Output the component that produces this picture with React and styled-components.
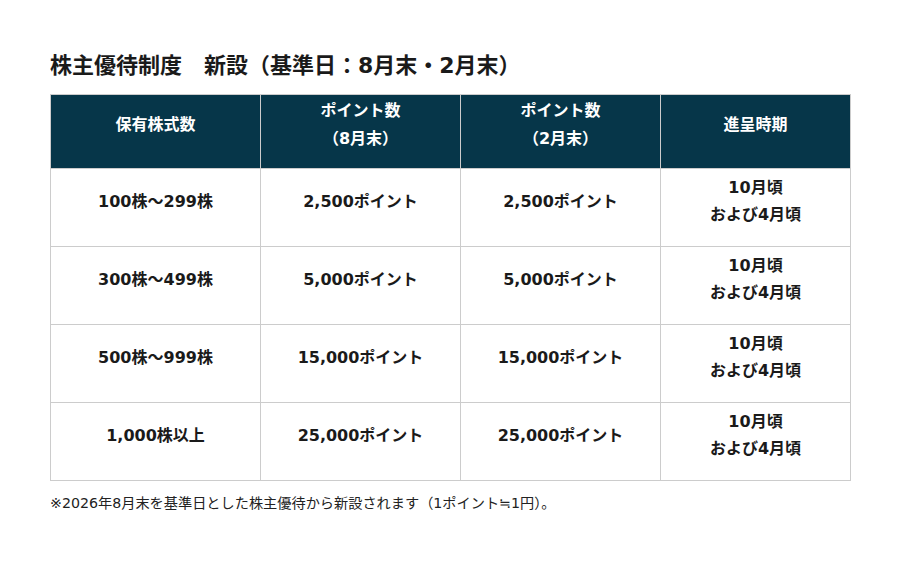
import React from "react";
import styled, { createGlobalStyle } from "styled-components";

const Global = createGlobalStyle`
  html, body { margin: 0; padding: 0; background: #fff; }
  body { font-family: "DejaVu Sans", "Noto Sans CJK JP", sans-serif; color: #1a1a1a; }
`;

const Page = styled.div`
  width: 900px;
  height: 568px;
  box-sizing: border-box;
  padding: 51px 50px 0 50px;
`;

const Title = styled.h2`
  margin: 0 0 13px 0;
  font-size: 22px;
  line-height: 30px;
  font-weight: bold;
  color: #1a1a1a;
  font-family: "DejaVu Sans", "Noto Sans CJK JP", sans-serif;
`;

const Table = styled.table`
  width: 800px;
  border-collapse: collapse;
  table-layout: fixed;
`;

const Th = styled.th`
  background: #063649;
  color: #fff;
  border: 1px solid #cccccc;
  height: 74px;
  box-sizing: border-box;
  padding: 0 0 13px 0;
  font-size: 16px;
  line-height: 28px;
  font-weight: bold;
  text-align: center;
  vertical-align: middle;
`;

const Td = styled.td`
  border: 1px solid #cccccc;
  height: 78px;
  box-sizing: border-box;
  padding: 0 0 13px 0;
  font-size: 16px;
  line-height: 27px;
  font-weight: bold;
  text-align: center;
  vertical-align: middle;
  color: #1a1a1a;
`;

const Note = styled.p`
  margin: 12px 0 0 0;
  font-size: 14.2px;
  line-height: 20px;
  color: #222;
`;

const widths = [210, 200, 200, 190];

const rows = [
  ["100株～299株", "2,500ポイント", "2,500ポイント"],
  ["300株～499株", "5,000ポイント", "5,000ポイント"],
  ["500株～999株", "15,000ポイント", "15,000ポイント"],
  ["1,000株以上", "25,000ポイント", "25,000ポイント"],
];

export default function App() {
  return (
    <>
      <Global />
      <Page>
        <Title>株主優待制度　新設（基準日：8月末・2月末）</Title>
        <Table>
          <colgroup>
            {widths.map((w, i) => (
              <col key={i} style={{ width: w }} />
            ))}
          </colgroup>
          <thead>
            <tr>
              <Th>保有株式数</Th>
              <Th>ポイント数<br />（8月末）</Th>
              <Th>ポイント数<br />（2月末）</Th>
              <Th>進呈時期</Th>
            </tr>
          </thead>
          <tbody>
            {rows.map((r) => (
              <tr key={r[0]}>
                <Td>{r[0]}</Td>
                <Td>{r[1]}</Td>
                <Td>{r[2]}</Td>
                <Td>10月頃<br />および4月頃</Td>
              </tr>
            ))}
          </tbody>
        </Table>
        <Note>※2026年8月末を基準日とした株主優待から新設されます（1ポイント≒1円）。</Note>
      </Page>
    </>
  );
}
